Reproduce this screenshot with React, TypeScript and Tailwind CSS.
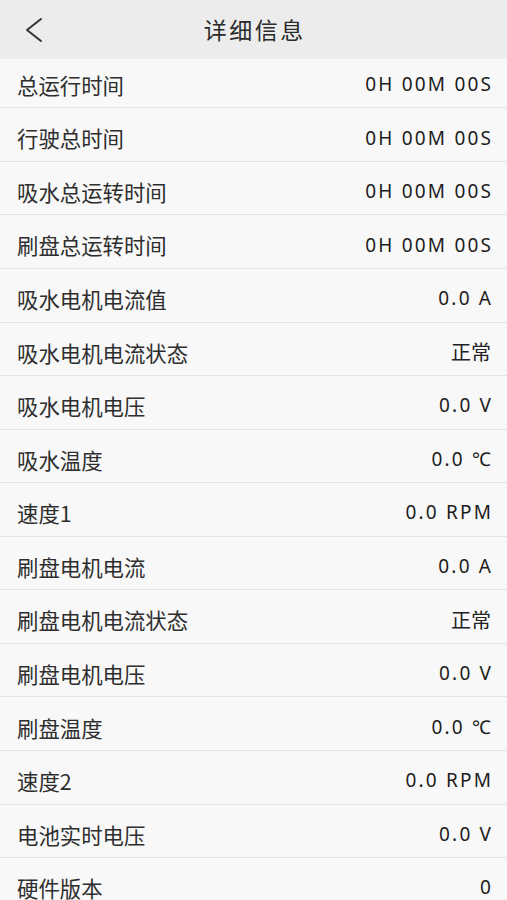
import React from "react";

const rows: [string, string][] = [
  ["总运行时间", "0H 00M 00S"],
  ["行驶总时间", "0H 00M 00S"],
  ["吸水总运转时间", "0H 00M 00S"],
  ["刷盘总运转时间", "0H 00M 00S"],
  ["吸水电机电流值", "0.0 A"],
  ["吸水电机电流状态", "正常"],
  ["吸水电机电压", "0.0 V"],
  ["吸水温度", "0.0 ℃"],
  ["速度1", "0.0 RPM"],
  ["刷盘电机电流", "0.0 A"],
  ["刷盘电机电流状态", "正常"],
  ["刷盘电机电压", "0.0 V"],
  ["刷盘温度", "0.0 ℃"],
  ["速度2", "0.0 RPM"],
  ["电池实时电压", "0.0 V"],
  ["硬件版本", "0"],
];

const cjk = { fontFamily: '"Noto Sans CJK SC", "Noto Sans", sans-serif' };
const latin = { fontFamily: '"Noto Sans", "Noto Sans CJK SC", sans-serif' };

export default function App() {
  return (
    <div className="w-[507px] h-[900px] overflow-hidden bg-[#f8f8f8]">
      <div className="relative z-10 h-[59px] bg-[#ececec] flex items-center justify-center">
        <svg
          className="absolute left-[24px] top-[16px]"
          width="20"
          height="28"
          viewBox="0 0 20 28"
          fill="none"
        >
          <polyline
            points="17,3 3,14 17,25"
            stroke="#333"
            strokeWidth="2"
            strokeLinecap="round"
            strokeLinejoin="round"
          />
        </svg>
        <span
          className="text-[23px] tracking-[2.5px] text-[#2a2a2a] pl-[2.5px]"
          style={cjk}
        >
          详细信息
        </span>
      </div>
      <div className="-mt-[4.3px]">
        {rows.map(([label, value], i) => {
          const isCjkValue = value === "正常";
          return (
            <div
              key={i}
              className="h-[53.57px] box-border border-b-[1.5px] border-[#e5e5e5] bg-[#f8f8f8] flex items-center justify-between pt-[7px] pl-[17px] pr-[16px]"
            >
              <span className="text-[21.4px] text-[#2e2e2e] leading-none" style={cjk}>
                {label}
              </span>
              {isCjkValue ? (
                <span className="text-[20px] text-[#222] leading-none" style={cjk}>
                  {value}
                </span>
              ) : (
                <span
                  className="text-[19px] font-normal tracking-[2.2px] -mr-[2.2px] text-[#1c1c1c] leading-none"
                  style={latin}
                >
                  {value}
                </span>
              )}
            </div>
          );
        })}
      </div>
    </div>
  );
}
